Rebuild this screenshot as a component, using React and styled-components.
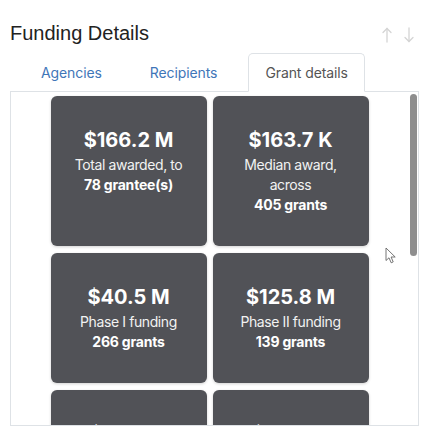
import styled, { createGlobalStyle } from 'styled-components';

const GlobalStyle = createGlobalStyle`
  html, body {
    margin: 0;
    padding: 0;
    background: #fff;
  }
  body {
    font-family: Inter, "Liberation Sans", sans-serif;
    -webkit-font-smoothing: antialiased;
  }
`;

const Page = styled.div`
  position: relative;
  width: 434px;
  height: 440px;
  overflow: hidden;
  background: #fff;
`;

const Header = styled.div`
  display: flex;
  justify-content: space-between;
  align-items: center;
  margin-top: 21px;
  padding: 0 20px 0 10px;
  height: 24px;
`;

const Title = styled.h2`
  margin: 0;
  font-family: "Liberation Sans", Arial, sans-serif;
  font-size: 20px;
  line-height: 24px;
  font-weight: 400;
  color: #222;
`;

const SortButtons = styled.div`
  display: flex;
  gap: 12px;
  margin-top: 4px;
`;

const Tabs = styled.ul`
  display: flex;
  gap: 14px;
  list-style: none;
  margin: 8px 0 0;
  padding: 0 0 0 24px;
  position: relative;
  z-index: 1;
`;

const Tab = styled.li`
  margin-bottom: -1px;
  padding: 8px 16px;
  font-size: 14px;
  line-height: 21px;
  letter-spacing: -0.1px;
  border: 1px solid ${p => (p.$active ? '#dee2e6' : 'transparent')};
  border-bottom-color: ${p => (p.$active ? '#fff' : 'transparent')};
  border-radius: 5px 5px 0 0;
  background: ${p => (p.$active ? '#fff' : 'transparent')};
  color: ${p => (p.$active ? '#555' : '#3f76b8')};
  cursor: pointer;
`;

const Box = styled.div`
  position: relative;
  margin-left: 10px;
  width: 409px;
  height: 335px;
  box-sizing: border-box;
  border: 1px solid #dee2e6;
  background: #fff;
`;

const Scroller = styled.div`
  height: 100%;
  overflow-y: auto;
  padding-right: 10px;
  box-sizing: border-box;
  scrollbar-width: none;
  &::-webkit-scrollbar {
    display: none;
  }
`;

const ScrollThumb = styled.div`
  position: absolute;
  top: 2px;
  right: 1px;
  width: 7px;
  height: 162px;
  border-radius: 4px;
  background: #8e8e8e;
`;

const Grid = styled.div`
  display: grid;
  grid-template-columns: repeat(2, 156px);
  justify-content: center;
  gap: 7px 6px;
  padding: 4px 0 60px;
`;

const Card = styled.div`
  background: #515257;
  border-radius: 6px;
  box-shadow: 0 1px 3px rgba(0, 0, 0, 0.18);
  padding: 32px 14px 31px;
  text-align: center;
  color: #fff;
`;

const Value = styled.div`
  font-size: 20px;
  line-height: 24px;
  font-weight: 700;
  margin-bottom: 3px;
`;

const Label = styled.div`
  font-size: 14px;
  line-height: 20px;
  font-weight: ${p => (p.$bold ? 700 : 400)};
  letter-spacing: ${p => (p.$bold ? '-0.2px' : '-0.4px')};
  color: ${p => (p.$bold ? '#fff' : '#f2f2f2')};
`;

const Cursor = styled.svg`
  position: absolute;
  left: 385px;
  top: 247px;
  pointer-events: none;
`;

const cards = [
  { value: '$166.2 M', label: 'Total awarded, to', count: '78 grantee(s)' },
  { value: '$163.7 K', label: 'Median award, across', count: '405 grants' },
  { value: '$40.5 M', label: 'Phase I funding', count: '266 grants' },
  { value: '$125.8 M', label: 'Phase II funding', count: '139 grants' },
  { value: '$12.4 M', label: 'Largest single award', count: '1 grant' },
  { value: '$50.0 K', label: 'Smallest single award', count: '1 grant' },
];

function Arrow({ up }) {
  return (
    <svg width="10" height="16" viewBox="0 0 10 16" fill="none" stroke="#d4d4d4" strokeWidth="1.3" strokeLinecap="round">
      {up ? (
        <>
          <path d="M5 1.5V15" />
          <path d="M1 5.5L5 1.5L9 5.5" />
        </>
      ) : (
        <>
          <path d="M5 1V14.5" />
          <path d="M1 10.5L5 14.5L9 10.5" />
        </>
      )}
    </svg>
  );
}

export default function App() {
  return (
    <Page>
      <GlobalStyle />
      <Header>
        <Title>Funding Details</Title>
        <SortButtons>
          <Arrow up />
          <Arrow />
        </SortButtons>
      </Header>
      <Tabs>
        <Tab>Agencies</Tab>
        <Tab>Recipients</Tab>
        <Tab $active>Grant details</Tab>
      </Tabs>
      <Box>
        <Scroller>
          <Grid>
            {cards.map(c => (
              <Card key={c.value}>
                <Value>{c.value}</Value>
                <Label>{c.label}</Label>
                <Label $bold>{c.count}</Label>
              </Card>
            ))}
          </Grid>
        </Scroller>
        <ScrollThumb />
      </Box>
      <Cursor width="12" height="17" viewBox="0 0 12 17">
        <path d="M1 1L1 13.5L4 10.8L6.2 15.8L8.2 14.9L6.1 10H10.2Z" fill="#fff" stroke="#333" strokeWidth="0.9" strokeLinejoin="round" opacity="0.75" />
      </Cursor>
    </Page>
  );
}
